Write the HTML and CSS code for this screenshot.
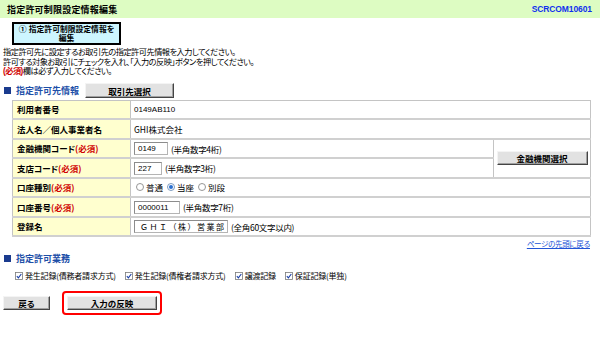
FILE: index.html
```html
<!DOCTYPE html>
<html lang="ja">
<head>
<meta charset="utf-8">
<title>指定許可制限設定情報編集</title>
<link rel="stylesheet" href="styles.css">
</head>
<body>
<header class="titlebar">
  <h1 class="title">指定許可制限設定情報編集</h1>
  <span class="screen-id">SCRCOM10601</span>
</header>

<div class="step">① 指定許可制限設定情報を<br>編集</div>

<div class="desc">
  <p class="desc-line">指定許可先に設定するお取引先の指定許可先情報を入力してください。</p>
  <p class="desc-line">許可する対象お取引にチェックを入れ、「入力の反映」ボタンを押してください。</p>
  <p class="desc-line"><span class="req">(必須)</span>欄は必ず入力してください。</p>
</div>

<div class="section-head">
  <h2 class="section-title"><span class="sq"></span>指定許可先情報</h2>
  <button class="btn btn-pick">取引先選択</button>
</div>

<table class="form">
  <tr>
    <th>利用者番号</th>
    <td colspan="2" class="val latin">0149AB110</td>
  </tr>
  <tr>
    <th>法人名／個人事業者名</th>
    <td colspan="2" class="val">GHI株式会社</td>
  </tr>
  <tr>
    <th>金融機関コード<span class="req">(必須)</span></th>
    <td class="val"><span class="field w34">0149</span><span class="note">(半角数字4桁)</span></td>
    <td rowspan="2" class="side"><button class="btn btn-bank">金融機関選択</button></td>
  </tr>
  <tr>
    <th>支店コード<span class="req">(必須)</span></th>
    <td class="val"><span class="field w28">227</span><span class="note">(半角数字3桁)</span></td>
  </tr>
  <tr>
    <th>口座種別<span class="req">(必須)</span></th>
    <td colspan="2" class="val">
      <span class="radios">
        <label class="radio"><svg width="8" height="8" viewBox="0 0 8 8"><circle cx="4" cy="4" r="3.5" fill="#fff" stroke="#8a8a8a" stroke-width="0.9"/></svg>普通</label>
        <label class="radio"><svg width="8" height="8" viewBox="0 0 8 8"><circle cx="4" cy="4" r="3.5" fill="#fff" stroke="#6d8fb8" stroke-width="0.9"/><circle cx="4" cy="4" r="2" fill="#2a6fd0"/></svg>当座</label>
        <label class="radio"><svg width="8" height="8" viewBox="0 0 8 8"><circle cx="4" cy="4" r="3.5" fill="#fff" stroke="#8a8a8a" stroke-width="0.9"/></svg>別段</label>
      </span>
    </td>
  </tr>
  <tr>
    <th>口座番号<span class="req">(必須)</span></th>
    <td colspan="2" class="val"><span class="field w46">0000011</span><span class="note">(半角数字7桁)</span></td>
  </tr>
  <tr>
    <th>登録名</th>
    <td colspan="2" class="val"><span class="field w94 wide">ＧＨＩ（株）営業部</span><span class="note">(全角60文字以内)</span></td>
  </tr>
</table>

<div class="to-top"><a href="#">ページの先頭に戻る</a></div>

<h2 class="section-title second"><span class="sq"></span>指定許可業務</h2>
<div class="checks">
  <label class="check"><svg width="8" height="8" viewBox="0 0 8 8"><rect x="0.5" y="0.5" width="7" height="7" fill="#fff" stroke="#7a7a7a" stroke-width="0.8"/><path d="M1.8 4.1 L3.4 5.8 L6.3 2" fill="none" stroke="#1a3fa8" stroke-width="1.1"/></svg>発生記録(債務者請求方式)</label>
  <label class="check"><svg width="8" height="8" viewBox="0 0 8 8"><rect x="0.5" y="0.5" width="7" height="7" fill="#fff" stroke="#7a7a7a" stroke-width="0.8"/><path d="M1.8 4.1 L3.4 5.8 L6.3 2" fill="none" stroke="#1a3fa8" stroke-width="1.1"/></svg>発生記録(債権者請求方式)</label>
  <label class="check"><svg width="8" height="8" viewBox="0 0 8 8"><rect x="0.5" y="0.5" width="7" height="7" fill="#fff" stroke="#7a7a7a" stroke-width="0.8"/><path d="M1.8 4.1 L3.4 5.8 L6.3 2" fill="none" stroke="#1a3fa8" stroke-width="1.1"/></svg>譲渡記録</label>
  <label class="check"><svg width="8" height="8" viewBox="0 0 8 8"><rect x="0.5" y="0.5" width="7" height="7" fill="#fff" stroke="#7a7a7a" stroke-width="0.8"/><path d="M1.8 4.1 L3.4 5.8 L6.3 2" fill="none" stroke="#1a3fa8" stroke-width="1.1"/></svg>保証記録(単独)</label>
</div>

<div class="actions">
  <button class="btn btn-back">戻る</button>
  <span class="highlight"><button class="btn btn-apply">入力の反映</button></span>
</div>
</body>
</html>
```

FILE: styles.css
```css
html, body {
  margin: 0;
  padding: 0;
  background: #fff;
}
body {
  font-family: "Noto Sans CJK JP", sans-serif;
  font-size: 8.5px;
  color: #000;
  font-feature-settings: "palt" 1;
  width: 600px;
  height: 347px;
  overflow: hidden;
}

.titlebar {
  display: flex;
  justify-content: space-between;
  align-items: center;
  height: 18px;
  background: #ddfcc2;
  padding: 0 8px 0 7px;
}
.title {
  margin: 0;
  font-size: 9px;
  font-weight: bold;
  letter-spacing: 0.2px;
}
.screen-id {
  font-family: "Liberation Sans", sans-serif;
  font-weight: bold;
  font-size: 8.5px;
  color: #1030ee;
  letter-spacing: -0.1px;
}

.step {
  margin: 4px 0 0 12px;
  width: 105px;
  height: 19px;
  border: 2px solid #000;
  background: #cdf6ff;
  font-family: "Liberation Sans", "Noto Sans CJK JP", sans-serif;
  font-weight: bold;
  font-size: 7.8px;
  line-height: 9px;
  text-align: center;
  display: flex;
  align-items: center;
  justify-content: center;
}

.desc {
  margin: 3px 0 0 3px;
  display: flex;
  flex-direction: column;
}
.desc-line {
  margin: 0;
  height: 9.5px;
  font-family: "Liberation Sans", "Noto Sans CJK JP", sans-serif;
  font-size: 8.2px;
  line-height: 9.5px;
  letter-spacing: -0.5px;
  white-space: nowrap;
}
.req {
  color: #d00000;
  font-weight: bold;
}

.section-head {
  display: flex;
  align-items: center;
  gap: 6px;
  margin: 6px 0 0 4px;
  height: 16px;
}
.section-title {
  display: flex;
  align-items: center;
  gap: 5px;
  margin: 0;
  font-size: 9px;
  font-weight: bold;
  color: #1d4fa8;
}
.sq {
  width: 7px;
  height: 7px;
  background: #1a3b8e;
}

.btn {
  font-family: "Noto Sans CJK JP", sans-serif;
  font-feature-settings: "palt" 1;
  font-size: 8.5px;
  font-weight: bold;
  color: #000;
  background: #e2e2e2;
  border: 1px solid;
  border-color: #f4f4f4 #444 #444 #f4f4f4;
  box-shadow: inset -1px -1px 0 #a0a0a0;
  padding: 0;
  line-height: 12px;
  cursor: pointer;
}
.btn-pick {
  width: 89px;
  height: 15px;
}
.btn-bank {
  width: 91px;
  height: 14px;
}
.btn-back {
  width: 47px;
  height: 14px;
}
.btn-apply {
  width: 90px;
  height: 14px;
}

.form {
  margin: 1px 0 0 12px;
  width: 579px;
  border-collapse: collapse;
  border: 1px solid #b8b8b8;
}
.form th,
.form td {
  border: 1px solid #c4c4c4;
  border-bottom: 2px solid #d0d0d0;
  height: 17.5px;
  padding: 0;
  vertical-align: middle;
}
.form th {
  width: 113px;
  background: #ffffcf;
  text-align: left;
  padding-left: 4px;
  font-weight: bold;
  font-size: 8.5px;
  white-space: nowrap;
}
.form td.val {
  padding-left: 3px;
  font-size: 8.5px;
}
.form td.side {
  width: 96px;
  text-align: center;
}
.latin {
  font-family: "Liberation Sans", "Noto Sans CJK JP", sans-serif;
  font-size: 8px !important;
}

.field {
  display: inline-block;
  box-sizing: border-box;
  height: 13px;
  line-height: 11px;
  border: 1px solid #b4b4b4;
  border-top-color: #8c8c8c;
  border-left-color: #8c8c8c;
  padding-left: 3px;
  font-family: "Liberation Sans", "Noto Sans CJK JP", sans-serif;
  font-size: 8px;
  vertical-align: middle;
  background: #fff;
}
.w28 { width: 28px; }
.w34 { width: 34px; }
.w46 { width: 46px; }
.w94 { width: 94px; }
.wide {
  letter-spacing: 1.5px;
  font-family: "Noto Sans CJK JP", sans-serif;
  font-feature-settings: normal;
  padding-left: 5px;
}
.note {
  margin-left: 3px;
  vertical-align: middle;
  letter-spacing: -0.3px;
}

.radios {
  display: inline-flex;
  gap: 4px;
  padding-left: 2px;
}
.radio,
.check {
  display: inline-flex;
  align-items: center;
  gap: 2px;
}

.to-top {
  display: flex;
  justify-content: flex-end;
  padding-right: 10px;
  margin-top: 2px;
  height: 10px;
}
.to-top a {
  color: #2254d6;
  font-size: 7.5px;
  line-height: 10px;
  letter-spacing: -0.3px;
}

.second {
  margin: 3px 0 0 4px;
}

.checks {
  display: flex;
  gap: 9px;
  margin: 5px 0 0 15px;
  font-size: 8px;
  letter-spacing: -0.2px;
}

.actions {
  display: flex;
  align-items: center;
  gap: 12px;
  margin: 10px 0 0 3px;
}
.highlight {
  display: inline-flex;
  padding: 3px 3px;
  border: 2px solid #f00;
  border-radius: 4px;
}
```
